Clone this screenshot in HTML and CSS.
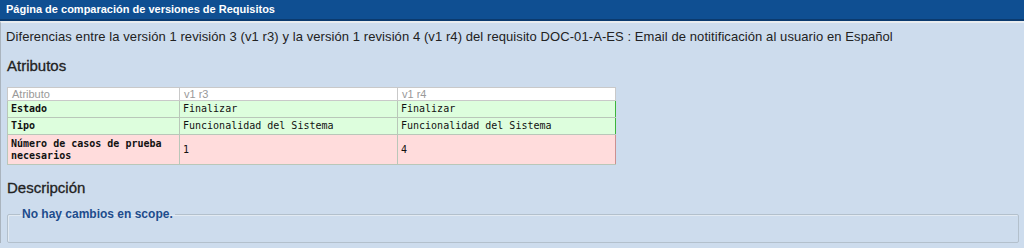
FILE: index.html
```html
<!doctype html>
<html lang="es">
<head>
<meta charset="utf-8">
<title>Página de comparación de versiones de Requisitos</title>
<link rel="stylesheet" href="styles.css">
</head>
<body>

	<div class="titleBar">Página de comparación de versiones de Requisitos</div>

	<div class="content">

		<p class="intro">Diferencias entre la versión 1 revisión 3 (v1 r3) y la versión 1 revisión 4 (v1 r4) del requisito DOC-01-A-ES : Email de notitificación al usuario en Español</p>

		<h3>Atributos</h3>

		<table class="diff">
			<colgroup>
				<col class="colName">
				<col class="colVer">
				<col class="colVer">
			</colgroup>
			<tr class="head">
				<th>Atributo</th>
				<th>v1 r3</th>
				<th>v1 r4</th>
			</tr>
			<tr class="same">
				<td class="name">Estado</td>
				<td>Finalizar</td>
				<td>Finalizar</td>
			</tr>
			<tr class="same">
				<td class="name">Tipo</td>
				<td>Funcionalidad del Sistema</td>
				<td>Funcionalidad del Sistema</td>
			</tr>
			<tr class="changed">
				<td class="name">Número de casos de prueba necesarios</td>
				<td>1</td>
				<td>4</td>
			</tr>
		</table>

		<h3 class="descTitle">Descripción</h3>

		<fieldset class="box">
			<legend>No hay cambios en scope.</legend>
		</fieldset>

	</div>

</body>
</html>
```

FILE: styles.css
```css
	body { background-color: #cddced; font: 13px "Liberation Sans", Arial, sans-serif; margin: 0; }

	.titleBar { background-color: #0f4f92; border-bottom: 2px solid #0b3a6e; color: #fff; font-weight: bold; font-size: 11px; height: 19px; line-height: 19px; padding: 0 6px; }

	.content { border-top: 2px solid #e8ecef; border-left: 1px solid #aab4be; padding: 0 4px 0 5px; }

	.intro { color: #222; letter-spacing: 0.08px; margin: 0; padding: 6px 0 0 0; line-height: 16px; }

	h3 { color: #222; font-size: 15px; font-weight: normal; -webkit-text-stroke: 0.3px #222; margin: 0; padding: 12px 0 0 1px; line-height: 18px; }
	h3.descTitle { padding-top: 14px; }

	table.diff { border-collapse: collapse; margin: 12px 0 0 1px; table-layout: fixed; width: 608px; font: 10px "DejaVu Sans Mono", monospace; }
	.colName { width: 172px; }
	.colVer { width: 218px; }

	table.diff th { background-color: #fff; border: 1px solid #c9c9c9; color: #999; font: 11px "Liberation Sans", Arial, sans-serif; height: 12px; line-height: 12px; padding: 0 4px; text-align: left; }
	table.diff td { border: 1px solid #b9c7b9; color: #111; line-height: 12px; padding: 0 3px; vertical-align: middle; }

	.same td { background-color: #ddfedd; border-left: 2px solid #3cb43c; height: 16px; }
	.changed td { background-color: #ffdcdc; border-left: 2px solid #cc2020; border-bottom: 1px solid #cfc6c6; height: 29px; }
	td.name { font-weight: bold; }
	.same td:last-child { border-right: 1px solid #3cb43c; }
	.changed td:last-child { border-right: 1px solid #cc9090; }

	fieldset.box { border: 1px solid #b3c0cc; border-radius: 2px; box-shadow: inset 1px 1px 0 #e2eaf2; margin: 10px 1px 0 1px; padding: 0 12px 21px 12px; }
	fieldset.box legend { color: #1e4c8c; font-weight: bold; font-size: 12px; line-height: 14px; padding: 0 2px; }
```
